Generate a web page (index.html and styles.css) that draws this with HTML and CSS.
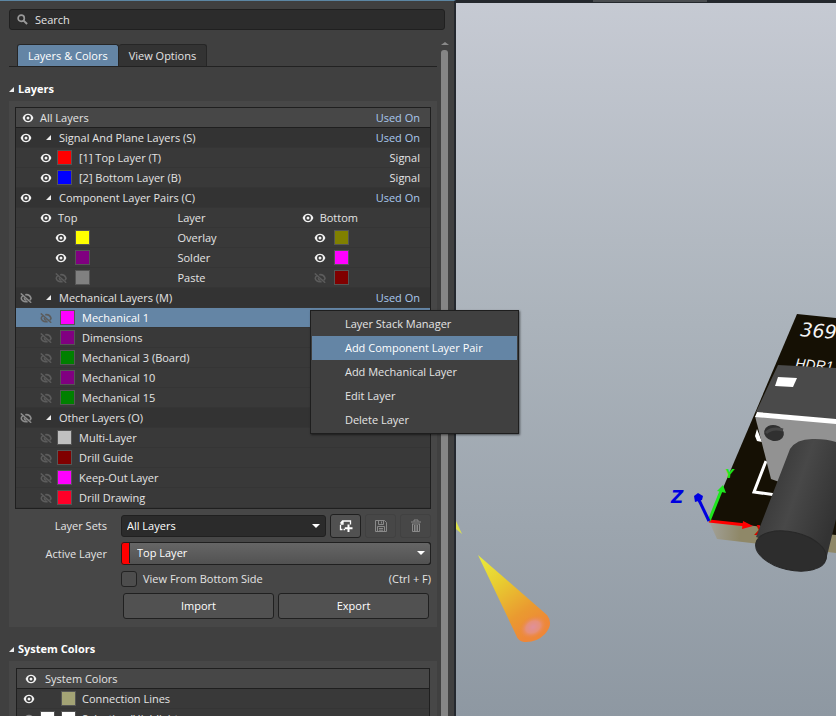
FILE: index.html
```html
<!DOCTYPE html>
<html lang="en">
<head>
<meta charset="utf-8">
<title>View Configuration</title>
<link rel="stylesheet" href="styles.css">
</head>
<body>
<svg class="defs" aria-hidden="true">
  <symbol id="eye" viewBox="0 0 12 10">
    <path d="M0.6 5C1.6 2.2 3.6 0.8 6 0.8S10.4 2.2 11.4 5C10.4 7.8 8.4 9.2 6 9.2S1.6 7.8 .6 5Z" fill="currentColor"/>
    <circle cx="6" cy="5" r="2.9" fill="#333"/>
    <circle cx="6" cy="5" r="1.5" fill="currentColor"/>
  </symbol>
  <symbol id="eye-off" viewBox="0 0 12 10">
    <path d="M2.800 2.800C.8 4.200 .8 6.200 2.600 7.600C4 8.800 6 9 7.600 8.600" fill="none" stroke="currentColor" stroke-width="1.600"/>
    <path d="M5.200 1.700C8 1.300 10.200 2.800 11 5.200Q10.700 6.400 9.800 7.300" fill="none" stroke="currentColor" stroke-width="1.600"/>
    <path d="M4.300 4.600a2 2 0 0 0 2.300 2.500" fill="none" stroke="currentColor" stroke-width="1.300"/>
    <path d="M.8 .4l10.400 9.400" stroke="currentColor" stroke-width="1.400"/>
  </symbol>
  <symbol id="fold" viewBox="0 0 5 5"><path d="M5 0v5H0z" fill="currentColor"/></symbol>
</svg>

<div class="app">
  <aside class="panel">
    <label class="search">
      <svg viewBox="0 0 12 12" aria-hidden="true"><circle cx="4.600" cy="4.600" r="3.400" fill="none" stroke="currentColor" stroke-width="1.800"/><path d="M7.200 7.200L11 11" stroke="currentColor" stroke-width="2.200"/></svg>
      <input type="text" placeholder="Search" aria-label="Search">
    </label>

    <div class="body">
      <div class="content">
        <nav class="tabs">
          <button class="tab active">Layers &amp; Colors</button>
          <button class="tab">View Options</button>
        </nav>

        <h2><svg class="fold"><use href="#fold"/></svg>Layers</h2>
        <section class="group">
          <ul class="list">
            <li class="row head"><button class="eye" aria-label="All layers"><svg><use href="#eye"/></svg></button><span class="name">All Layers</span><a href="#">Used On</a></li>
            <li class="row cat"><button class="eye" aria-label="Signal layers"><svg><use href="#eye"/></svg></button><svg class="fold"><use href="#fold"/></svg><span class="name">Signal And Plane Layers (S)</span><a href="#">Used On</a></li>
            <li class="row sub"><button class="eye" aria-label="Top layer"><svg><use href="#eye"/></svg></button><i class="swatch red"></i><span class="name">[1] Top Layer (T)</span><span>Signal</span></li>
            <li class="row sub"><button class="eye" aria-label="Bottom layer"><svg><use href="#eye"/></svg></button><i class="swatch blue"></i><span class="name">[2] Bottom Layer (B)</span><span>Signal</span></li>
            <li class="row cat"><button class="eye" aria-label="Component layers"><svg><use href="#eye"/></svg></button><svg class="fold"><use href="#fold"/></svg><span class="name">Component Layer Pairs (C)</span><a href="#">Used On</a></li>
            <li>
              <table class="pairs">
                <thead>
                  <tr>
                    <th class="top"><div class="cell"><button class="eye" aria-label="Top side"><svg><use href="#eye"/></svg></button>Top</div></th>
                    <th class="mid">Layer</th>
                    <th><div class="cell"><button class="eye" aria-label="Bottom side"><svg><use href="#eye"/></svg></button>Bottom</div></th>
                  </tr>
                </thead>
                <tbody>
                  <tr>
                    <td class="top"><div class="cell"><button class="eye" aria-label="Top overlay"><svg><use href="#eye"/></svg></button><i class="swatch yellow"></i></div></td>
                    <td>Overlay</td>
                    <td class="bottom"><div class="cell"><button class="eye" aria-label="Bottom overlay"><svg><use href="#eye"/></svg></button><i class="swatch olive"></i></div></td>
                  </tr>
                  <tr>
                    <td class="top"><div class="cell"><button class="eye" aria-label="Top solder"><svg><use href="#eye"/></svg></button><i class="swatch purple"></i></div></td>
                    <td>Solder</td>
                    <td class="bottom"><div class="cell"><button class="eye" aria-label="Bottom solder"><svg><use href="#eye"/></svg></button><i class="swatch magenta"></i></div></td>
                  </tr>
                  <tr>
                    <td class="top"><div class="cell"><button class="eye off" aria-label="Top paste"><svg><use href="#eye-off"/></svg></button><i class="swatch gray"></i></div></td>
                    <td>Paste</td>
                    <td class="bottom"><div class="cell"><button class="eye off" aria-label="Bottom paste"><svg><use href="#eye-off"/></svg></button><i class="swatch maroon"></i></div></td>
                  </tr>
                </tbody>
              </table>
            </li>
            <li class="row cat"><button class="eye dim" aria-label="Mechanical layers"><svg><use href="#eye-off"/></svg></button><svg class="fold"><use href="#fold"/></svg><span class="name">Mechanical Layers (M)</span><a href="#">Used On</a></li>
            <li class="row sub mech selected"><button class="eye off" aria-label="Mechanical 1"><svg><use href="#eye-off"/></svg></button><i class="swatch magenta"></i><span class="name">Mechanical 1</span>
              <div class="menu" role="menu">
                <button role="menuitem">Layer Stack Manager</button>
                <button role="menuitem" class="current">Add Component Layer Pair</button>
                <button role="menuitem">Add Mechanical Layer</button>
                <button role="menuitem">Edit Layer</button>
                <button role="menuitem">Delete Layer</button>
              </div>
            </li>
            <li class="row sub mech"><button class="eye off" aria-label="Dimensions"><svg><use href="#eye-off"/></svg></button><i class="swatch purple"></i><span class="name">Dimensions</span></li>
            <li class="row sub mech"><button class="eye off" aria-label="Mechanical 3"><svg><use href="#eye-off"/></svg></button><i class="swatch green"></i><span class="name">Mechanical 3 (Board)</span></li>
            <li class="row sub mech"><button class="eye off" aria-label="Mechanical 10"><svg><use href="#eye-off"/></svg></button><i class="swatch purple"></i><span class="name">Mechanical 10</span></li>
            <li class="row sub mech"><button class="eye off" aria-label="Mechanical 15"><svg><use href="#eye-off"/></svg></button><i class="swatch green"></i><span class="name">Mechanical 15</span></li>
            <li class="row cat"><button class="eye dim" aria-label="Other layers"><svg><use href="#eye-off"/></svg></button><svg class="fold"><use href="#fold"/></svg><span class="name">Other Layers (O)</span></li>
            <li class="row sub"><button class="eye off" aria-label="Multi-Layer"><svg><use href="#eye-off"/></svg></button><i class="swatch silver"></i><span class="name">Multi-Layer</span></li>
            <li class="row sub"><button class="eye off" aria-label="Drill Guide"><svg><use href="#eye-off"/></svg></button><i class="swatch maroon"></i><span class="name">Drill Guide</span></li>
            <li class="row sub"><button class="eye off" aria-label="Keep-Out Layer"><svg><use href="#eye-off"/></svg></button><i class="swatch magenta"></i><span class="name">Keep-Out Layer</span></li>
            <li class="row sub"><button class="eye off" aria-label="Drill Drawing"><svg><use href="#eye-off"/></svg></button><i class="swatch crimson"></i><span class="name">Drill Drawing</span></li>
          </ul>

          <div class="form">
            <label for="sets">Layer Sets</label>
            <div class="line">
              <div class="select dark"><select id="sets"><option>All Layers</option></select></div>
              <button class="tool" aria-label="Add layer set"><svg viewBox="0 0 14 14"><path d="M6 10.500H4.500M3.500 10.500H1.500V6M1.500 4.500L3.500 2H11.500V5.500M1.500 5H4V2" fill="none" stroke="currentColor" stroke-width="1.300"/><path d="M9.500 5.500v7.500M5.800 9.200h7.700" stroke="currentColor" stroke-width="2"/></svg></button>
              <button class="tool" disabled aria-label="Save layer set"><svg viewBox="0 0 14 14"><path d="M1.500 1.500h9l2 2v9h-11zM4.500 1.500v4h5v-4M7.500 2.500v2M3.500 12v-4.500h7v4.500M5 9.500h4M5 11.200h4" fill="none" stroke="currentColor"/></svg></button>
              <button class="tool" disabled aria-label="Delete layer set"><svg viewBox="0 0 14 14"><path d="M5 2.500v-1.500h4v1.500M2 3h10M3 5h8M3.500 5v7.500h7v-7.500M5.500 6v6M7 6v6M8.500 6v6" fill="none" stroke="currentColor"/></svg></button>
            </div>
            <label for="active">Active Layer</label>
            <div class="select light"><select id="active"><option>Top Layer</option></select></div>
            <div class="line check"><input type="checkbox" id="flip"><label for="flip">View From Bottom Side</label><span>(Ctrl + F)</span></div>
            <div class="line actions"><button>Import</button><button>Export</button></div>
          </div>
        </section>

        <h2><svg class="fold"><use href="#fold"/></svg>System Colors</h2>
        <section class="group system">
          <ul class="list">
            <li class="row head"><button class="eye" aria-label="System colors"><svg><use href="#eye"/></svg></button><span class="name">System Colors</span></li>
            <li class="row pair"><button class="eye" aria-label="Connection lines"><svg><use href="#eye"/></svg></button><i class="swatch none"></i><i class="swatch khaki"></i><span class="name">Connection Lines</span></li>
            <li class="row pair"><button class="eye dim" aria-label="Selection"><svg><use href="#eye"/></svg></button><i class="swatch white"></i><i class="swatch white"></i><span class="name">Selection/Highlight</span></li>
          </ul>
        </section>
      </div>
      <div class="scroll"><svg viewBox="0 0 8 3" aria-hidden="true"><path d="M0 3L4 0l4 3z" fill="#8a8a8a"/></svg><div class="thumb"></div></div>
    </div>
  </aside>

  <main class="view">
    <div class="strip"><i></i></div>
    <svg viewBox="456 3 380 713" preserveAspectRatio="xMinYMin slice" role="img" aria-label="3D board view">
      <defs>
        <linearGradient id="cone" gradientUnits="userSpaceOnUse" x1="480" y1="557" x2="534" y2="632"><stop offset="0" stop-color="#e9ea3c"/><stop offset=".35" stop-color="#e8cc30"/><stop offset=".75" stop-color="#ea9a30"/><stop offset="1" stop-color="#ee8738"/></linearGradient>
        <radialGradient id="glow"><stop offset="0" stop-color="#e0909a"/><stop offset=".5" stop-color="#e6907a"/><stop offset="1" stop-color="#ee8738" stop-opacity="0"/></radialGradient>
        <linearGradient id="barrel" gradientUnits="userSpaceOnUse" x1="772" y1="490" x2="836" y2="512"><stop offset="0" stop-color="#3c3c3c"/><stop offset=".35" stop-color="#484848"/><stop offset="1" stop-color="#333"/></linearGradient>
        <linearGradient id="edge" gradientUnits="userSpaceOnUse" x1="709" y1="530" x2="740" y2="532"><stop offset="0" stop-color="#a2a199"/><stop offset="1" stop-color="#8f8868"/></linearGradient>
      </defs>
      <path d="M456 521L462 534L456 529Z" fill="#dde24c"/>
      <path d="M478 555L547 615Q554 624 545 634Q536 643 524 642Q518 641 516 635Z" fill="url(#cone)"/>
      <ellipse cx="533" cy="627" rx="15" ry="11" fill="url(#glow)" transform="rotate(-30 533 627)"/>
      <path d="M709 521L836 534V553L717 539Z" fill="url(#edge)"/>
      <path d="M797 314L836 318V535L709 521Z" fill="#151004"/>
      <text class="mark large" transform="rotate(5 801 336)" x="800" y="336">369</text>
      <text class="mark" transform="rotate(5 795 368)" x="795" y="368">HDR1</text>
      <path d="M778 365L836 368V420L756 412Z" fill="#4a4a4a"/>
      <path d="M778 377L797 378L793 387L775 386Z" fill="#fff"/>
      <path d="M757 429L762 442L757 441L755 436Z" fill="#fff"/>
      <path d="M766 461L754 492L776 495" fill="none" stroke="#fff" stroke-width="3"/>
      <path d="M755 416L836 423V460L782 483L771 479Z" fill="#929292"/>
      <path d="M757 412L836 419V424L755 417Z" fill="#fff"/>
      <ellipse cx="774" cy="433" rx="10" ry="8" fill="#303030" transform="rotate(12 774 433)"/>
      <path d="M766 433Q772 427 783 430" fill="none" stroke="#454545" stroke-width="3"/>
      <g class="axis x"><path d="M709 521L746 525" stroke="red" stroke-width="3"/><path d="M743 521L753 526L742 529Z" fill="red"/><text x="755" y="535">X</text></g>
      <g class="axis y"><path d="M709 521L721 491" stroke="#1ee61e" stroke-width="3"/><path d="M723 485L726 493L717 491Z" fill="#1ee61e"/><text x="725" y="478">Y</text></g>
      <g class="axis z"><path d="M709 521L698 498" stroke="#0000e0" stroke-width="3"/><path d="M694 496L698 493L703 496L702 500L695 502Z" fill="#0000e0"/><text x="671" y="503">Z</text></g>
      <path d="M790 449Q797 438 815 439Q827 439 836 442V519L826 560L756 537Z" fill="url(#barrel)"/>
      <ellipse cx="791" cy="551" rx="36" ry="19" fill="#2d2d2d" stroke="#282828" transform="rotate(13 791 551)"/>
    </svg>
  </main>
</div>
</body>
</html>
```
FILE: styles.css
```css
* { box-sizing: border-box; }

body {
  margin: 0;
  overflow: hidden;
  background: #24282d;
  color: #e4e4e4;
  font: 11px/20px "Open Sans", "Noto Sans", sans-serif;
}

button, input, select {
  margin: 0;
  padding: 0;
  border: 0;
  background: none;
  color: inherit;
  font: inherit;
}

ul { margin: 0; padding: 0; list-style: none; }
a { color: #a9c8ee; text-decoration: none; }
.defs { position: absolute; width: 0; height: 0; }

.app {
  display: grid;
  grid-template-columns: minmax(0, 6fr) minmax(0, 5fr);
  height: 100vh;
}

.panel {
  position: relative;
  z-index: 1;
  display: flex;
  flex-direction: column;
  height: 100vh;
  padding: 8px 4px 0 9px;
  border-top: 1px solid #5c86a3;
  border-right: 2px solid #24282e;
  background: #404040;
}

.search {
  display: flex;
  align-items: center;
  gap: 7px;
  height: 21px;
  margin-right: 5px;
  padding: 0 7px;
  border: 1px solid #202020;
  border-radius: 3px;
  background: #2c2c2c;
}
.search svg { width: 11px; height: 11px; color: #999; }
.search input { flex: 1; height: 18px; outline: 0; }
.search input::placeholder { color: #e4e4e4; opacity: 1; }

.body { display: flex; flex: 1; gap: 4px; min-height: 0; }
.content { flex: 1; min-width: 0; padding-top: 14px; }

.scroll { display: flex; flex-direction: column; gap: 5px; width: 9px; padding-top: 12px; }
.scroll svg { width: 8px; height: 3px; }
.thumb { flex: 1; width: 7px; border-radius: 3px 3px 0 0; background: #858585; }

.tabs { display: flex; height: 23px; padding-left: 8px; border-bottom: 1px solid #222; }
.tab { padding: 0 10px; border: 1px solid #262626; border-bottom: 0; border-radius: 3px 3px 0 0; background: #333; }
.tab + .tab { border-left: 0; }
.tab.active { background: #6485a5; color: #fff; }

h2 {
  display: flex;
  align-items: center;
  gap: 4px;
  height: 20px;
  margin: 12px 0 2px;
  color: #fff;
  font-size: 11px;
  font-weight: 700;
}
.fold { width: 5px; height: 5px; color: #eee; }

.group { padding: 6px; background: #474747; }
.list { border: 1px solid #1f1f1f; background: #393939; }

.row { position: relative; display: flex; align-items: center; height: 20px; padding-right: 10px; border-bottom: 1px solid #353535; }
.row .name { flex: 1; }
.head { border-bottom-color: #1f1f1f; background: #474747; padding-left: 6px; }
.head .eye { margin-right: 6px; }
.cat { padding-left: 4px; background: #333; }
.cat .eye { margin-right: 14px; }
.cat .fold { margin-right: 8px; }
.sub { padding-left: 24px; }
.sub .eye { margin-right: 5px; }
.sub .swatch { margin-right: 7px; }
.sub.mech .eye { margin-right: 8px; }
.selected { background: #6485a5; color: #fff; }
.pair { padding-left: 6px; }
.pair .eye { margin-right: 5px; }
.pair .swatch { margin-right: 6px; }

.eye { display: block; width: 12px; height: 10px; color: #f2f2f2; }
.eye svg { display: block; width: 12px; height: 10px; }
.eye.dim { color: #8c8c8c; }
.eye.off { color: #5c5c5c; }

.swatch { width: 15px; height: 15px; border: 1px solid #555; }
.red { background: #f00; }
.blue { background: #00f; }
.yellow { background: #ff0; }
.olive { background: #808000; }
.purple { background: #800080; }
.magenta { background: #f0f; }
.gray { background: #808080; }
.maroon { background: #800000; }
.green { background: #008000; }
.silver { background: #c0c0c0; }
.crimson { background: #ff0028; }
.khaki { background: #a3a375; }
.white { background: #fff; }
.none { visibility: hidden; }

.pairs { width: 100%; table-layout: fixed; border-spacing: 0; }
.pairs th, .pairs td { height: 20px; padding: 0; border-bottom: 1px solid #353535; font-weight: 400; line-height: 19px; text-align: left; }
.pairs th.top { width: 39%; padding-left: 24px; }
.pairs th.mid { width: 30%; }
.pairs td.top { padding-left: 39px; }
.pairs td.bottom { padding-left: 12px; }
.cell { display: flex; align-items: center; gap: 6px; height: 19px; }
td .cell { gap: 8px; }

.menu {
  position: absolute;
  z-index: 2;
  top: 2px;
  left: 71%;
  width: max-content;
  padding: 1px;
  border: 1px solid #1e1e1e;
  background: #404040;
  box-shadow: 1px 1px 2px #0008;
  color: #e4e4e4;
}
.menu button { display: block; width: 100%; height: 24px; padding: 0 34px 0 33px; text-align: left; }
.menu .current { background: #6485a5; color: #fff; }

.form {
  display: grid;
  grid-template-columns: 92px minmax(0, 1fr);
  column-gap: 14px;
  row-gap: 4px;
  align-items: center;
  padding: 5px 0 2px;
}
.form > label { text-align: right; }
.line { display: flex; align-items: center; gap: 4px; }
.check, .actions { grid-column: 2; }

.select { position: relative; flex: 1; height: 22px; border: 1px solid #202020; border-radius: 3px; }
.select::after {
  content: "";
  position: absolute;
  top: 8px;
  right: 5px;
  border: 4px solid transparent;
  border-top-color: #fff;
  border-bottom: 0;
  pointer-events: none;
}
.select select { display: block; width: 100%; height: 20px; padding-left: 5px; appearance: none; color: #fff; }
.dark { background: #2b2b2b; }
.light { height: 23px; border-left: 9px solid #f00; outline: 1px solid #202020; outline-offset: -1px; background: linear-gradient(#666, #525252); }
.light select { padding-left: 7px; box-shadow: -1px 0 #202020; }

.tool { display: grid; place-items: center; width: 31px; height: 24px; border: 1px solid #202020; border-radius: 3px; background: #515151; color: #fff; }
.tool svg { width: 14px; height: 14px; }
.tool:disabled { border-color: #414141; background: #474747; color: #8a8a8a; }

.check { height: 20px; gap: 6px; }
.check label { flex: 1; }
.check input { width: 16px; height: 16px; appearance: none; border: 1px solid #222; border-radius: 3px; background: #4d4d4d; }

.actions { padding: 0 2px; }
.actions button { flex: 1; height: 26px; border: 1px solid #202020; border-radius: 3px; background: #515151; color: #fff; }

.system { padding: 7px; }
.system .head { padding-left: 8px; }
.system .head .eye { margin-right: 8px; }

.view { display: flex; flex-direction: column; min-width: 0; height: 100vh; }
.strip { height: 3px; }
.strip i { display: block; width: 30%; height: 2px; margin-left: 36%; background: #4a4d50; }
.view svg { display: block; flex: 1; width: 100%; min-height: 0; background: linear-gradient(#c6cad3, #abb3bb 45%, #8e98a2); }
.mark { fill: #f4f4f4; font: italic 14px "Liberation Sans", sans-serif; }
.mark.large { font: italic 19px "DejaVu Sans", sans-serif; }
.axis text { font: italic bold 14px "DejaVu Sans", sans-serif; }
.x text { fill: #e00000; }
.y text { fill: #1ee61e; font-size: 12px; }
.z text { fill: #0000e0; font-size: 17px; }
```
